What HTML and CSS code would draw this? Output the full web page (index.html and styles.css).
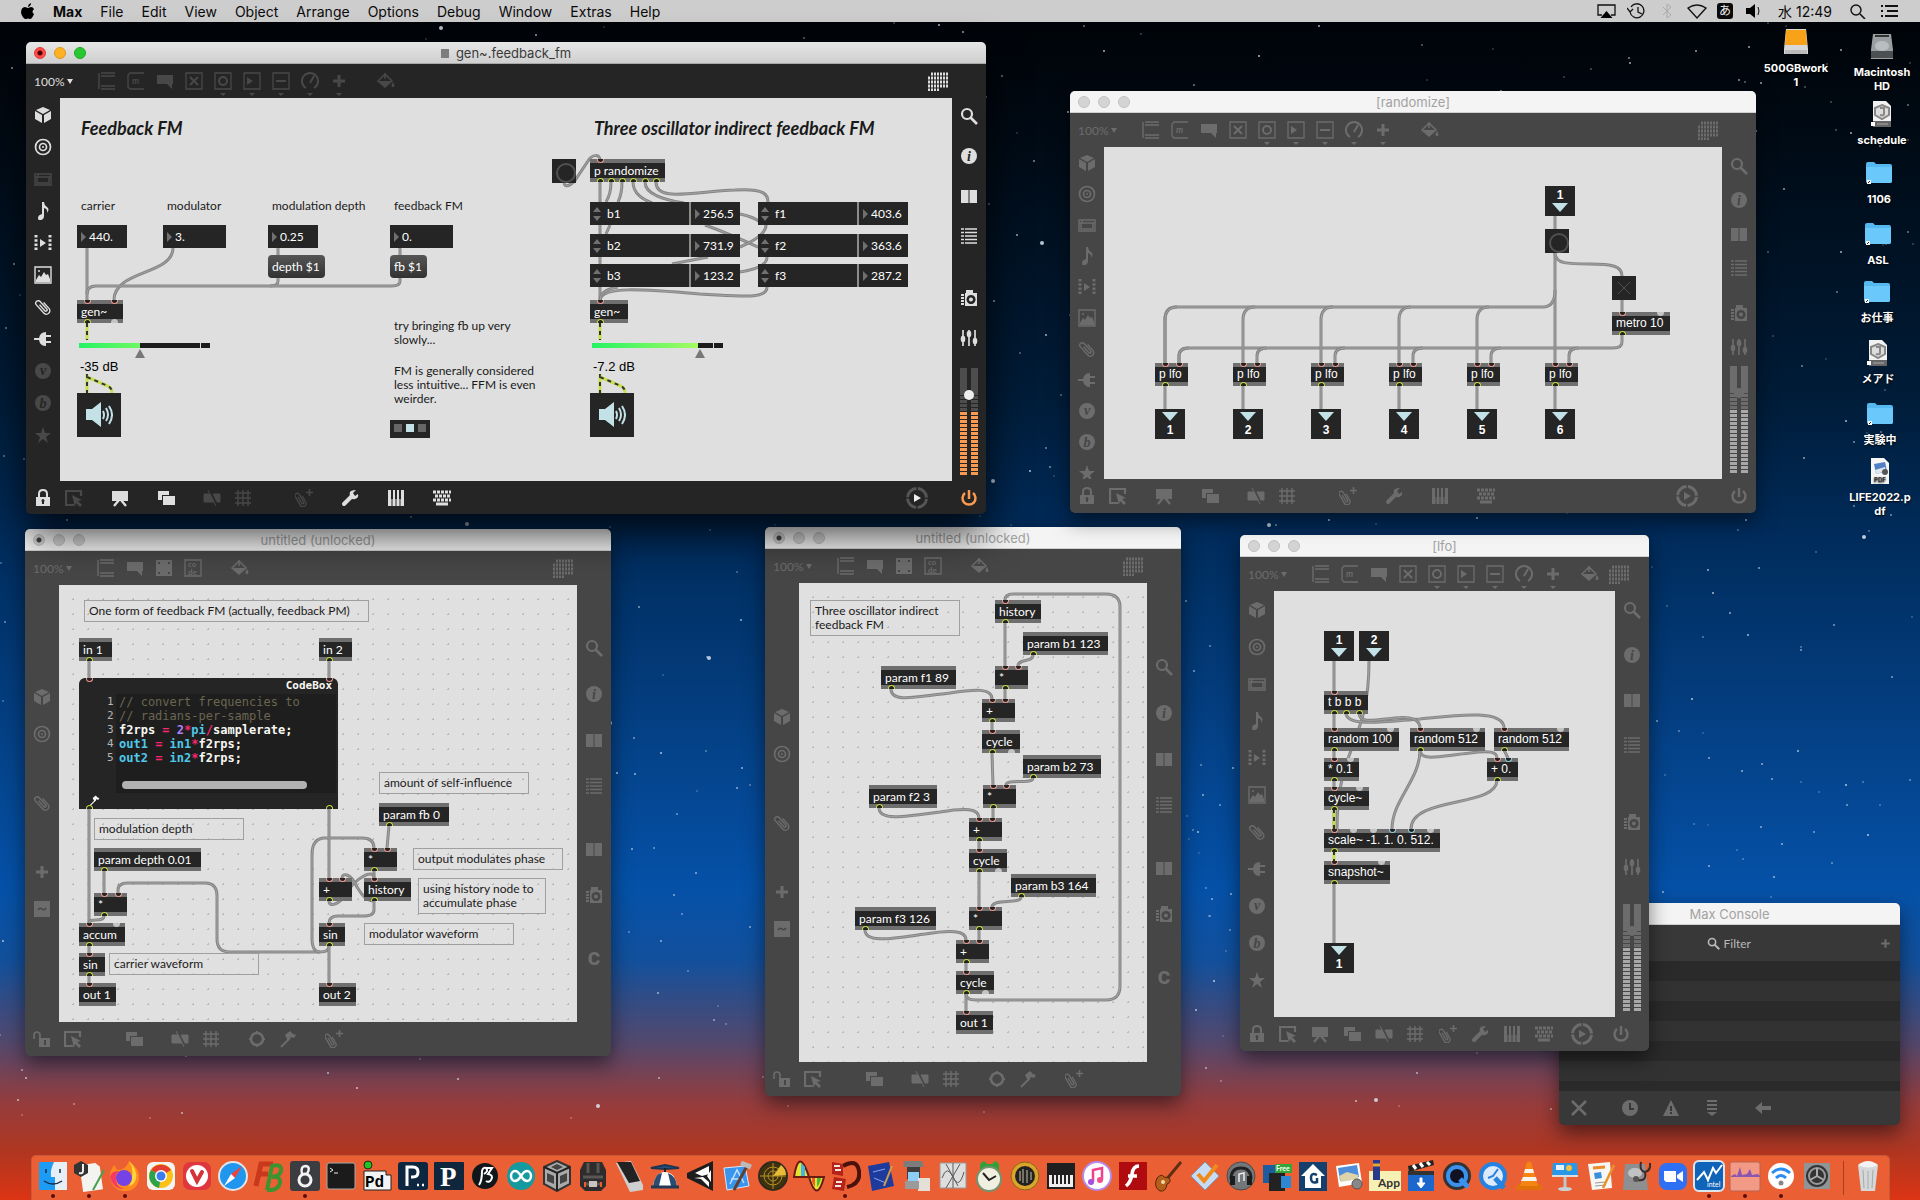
FILE: index.html
```html
<!DOCTYPE html>
<html lang="ja">
<head>
    <meta charset="UTF-8">
    <meta name="viewport" content="width=device-width, initial-scale=1.0">
    <title>Max</title>
    <link rel="stylesheet" href="styles.css">
</head>
<body>
    <!-- icon sprite -->
    <svg class="sprite" aria-hidden="true">
        <symbol id="object" viewBox="0 0 18 18"><path d="M1 1v16M3 1h14M3 4h14M3 14h14M3 17h14" fill="none" stroke="currentColor" stroke-width="1.4"/></symbol>
        <symbol id="message" viewBox="0 0 18 18"><path d="M17 1H3L1 3v12l2 2h14" fill="none" stroke="currentColor" stroke-width="1.3"/><text x="5" y="12" font-size="9" font-weight="bold" font-style="italic" fill="currentColor">m</text></symbol>
        <symbol id="comment" viewBox="0 0 18 18"><path d="M1 3h16v9h-1v5l-5-5H1z" fill="currentColor"/></symbol>
        <symbol id="toggle" viewBox="0 0 18 18"><path d="M1 1h16v16H1z" fill="none" stroke="currentColor" stroke-width="1.3"/><path d="M5 5l8 8M13 5l-8 8" stroke="currentColor" stroke-width="2"/></symbol>
        <symbol id="button" viewBox="0 0 18 18"><path d="M1 1h16v16H1z" fill="none" stroke="currentColor" stroke-width="1.3"/><circle cx="9" cy="9" r="4" fill="none" stroke="currentColor" stroke-width="2"/></symbol>
        <symbol id="number" viewBox="0 0 18 18"><path d="M1 1h16v16H1z" fill="none" stroke="currentColor" stroke-width="1.3"/><path d="M4 5l6 4-6 4z" fill="currentColor"/></symbol>
        <symbol id="slider" viewBox="0 0 18 18"><path d="M1 1h16v16H1z" fill="none" stroke="currentColor" stroke-width="1.3"/><path d="M4 9h10" stroke="currentColor" stroke-width="2"/></symbol>
        <symbol id="dial" viewBox="0 0 18 18"><path d="M5 16a8 8 0 1 1 8 0M9 11l4-7" fill="none" stroke="currentColor" stroke-width="2"/></symbol>
        <symbol id="plus" viewBox="0 0 18 18"><path d="M9 3v12M3 9h12" stroke="currentColor" stroke-width="3"/></symbol>
        <symbol id="code" viewBox="0 0 18 18"><path d="M1 1h16v16H1z" fill="none" stroke="currentColor" stroke-width="1.3"/><text x="4" y="8" font-size="8" font-weight="bold" fill="currentColor">co</text><text x="4" y="16" font-size="8" font-weight="bold" fill="currentColor">de</text></symbol>
        <symbol id="operator" viewBox="0 0 18 18"><path d="M1 1h16v16H1z" fill="currentColor"/><path class="cutline" d="M4 3v2M14 3v2M4 13v2M14 13v2" stroke-width="2"/></symbol>
        <symbol id="paint" viewBox="0 0 18 18"><path d="M8 1v6M8 2l7 7-7 6-7-6z" fill="none" stroke="currentColor" stroke-width="1.5"/><path d="M2 9h12l-6 6zM16 10q3 5 0 5t0-5" fill="currentColor"/></symbol>
        <symbol id="cube" viewBox="0 0 18 18"><path d="M9 1l7 3-7 4-7-4zM1 5l7 4v8l-7-4zM17 5v8l-7 4V9z" fill="currentColor"/></symbol>
        <symbol id="target" viewBox="0 0 18 18"><g fill="none" stroke="currentColor" stroke-width="1.7"><circle cx="9" cy="9" r="7.5"/><circle cx="9" cy="9" r="3.5"/></g><circle cx="9" cy="9" r="1" fill="currentColor"/></symbol>
        <symbol id="drawer" viewBox="0 0 18 18"><path d="M1 4h16v11H1zM1 7h16M3 7v6h12V7M4 4v3" fill="none" stroke="currentColor" stroke-width="1.4"/></symbol>
        <symbol id="note" viewBox="0 0 18 18"><path d="M8 0h2q0 3 3 5t0 6q1-4-3-5v8q0 3-3 4t-3-2 4-4z" fill="currentColor"/></symbol>
        <symbol id="film" viewBox="0 0 18 18"><path d="M2 1v16M16 1v16" stroke="currentColor" stroke-width="3" stroke-dasharray="2.5 1.7"/><path d="M6 5l6 4-6 4z" fill="currentColor"/></symbol>
        <symbol id="image" viewBox="0 0 18 18"><path d="M1 1h16v16H1z" fill="none" stroke="currentColor" stroke-width="1.4"/><path d="M2 14l3-5 2 2 3-5 2 3 2-1 2 5v3H2z" fill="currentColor"/><circle cx="5" cy="5" r="1" fill="currentColor"/></symbol>
        <symbol id="clip" viewBox="0 0 18 18"><path transform="rotate(-42 9 9)" d="M12.500 6v8a3.500 3.500 0 0 1-7 0V3a2.500 2.500 0 0 1 5 0v10a1.300 1.300 0 0 1-2.600 0V5" fill="none" stroke="currentColor" stroke-width="1.400"/></symbol>
        <symbol id="clipadd" viewBox="0 0 18 18"><path transform="translate(-2 2) rotate(-30 9 9) scale(.9)" d="M12.500 6v8a3.500 3.500 0 0 1-7 0V3a2.500 2.500 0 0 1 5 0v10a1.300 1.300 0 0 1-2.600 0V5" fill="none" stroke="currentColor" stroke-width="1.400"/><path d="M14.500 0v7M11 3.500h7" stroke="currentColor" stroke-width="1.600"/></symbol>
        <symbol id="plug" viewBox="0 0 18 18"><path d="M0 8h5q1-6 7-6v3h5v2h-5v4h5v2h-5v3q-6 0-7-6H0z" fill="currentColor"/></symbol>
        <symbol id="vizzie" viewBox="0 0 18 18"><circle cx="9" cy="9" r="8" fill="currentColor"/><text x="9" y="13" text-anchor="middle" class="cut">v</text></symbol>
        <symbol id="beap" viewBox="0 0 18 18"><circle cx="9" cy="9" r="8" fill="currentColor"/><text x="9" y="14" text-anchor="middle" class="cut">b</text></symbol>
        <symbol id="info" viewBox="0 0 18 18"><circle cx="9" cy="9" r="8" fill="currentColor"/><text x="9" y="14" text-anchor="middle" class="cut">i</text></symbol>
        <symbol id="star" viewBox="0 0 18 18"><path d="M9 1l2 6h6l-5 4 2 6-5-4-5 4 2-6-5-4h6z" fill="currentColor"/></symbol>
        <symbol id="search" viewBox="0 0 18 18"><circle cx="7" cy="7" r="5" fill="none" stroke="currentColor" stroke-width="2.2"/><path d="M10 10l7 7" stroke="currentColor" stroke-width="2.6"/></symbol>
        <symbol id="book" viewBox="0 0 18 18"><path d="M1 3h7.500v13H1zM9.500 3H17v13H9.500z" fill="currentColor"/></symbol>
        <symbol id="list" viewBox="0 0 18 18"><path d="M1 2h3M5 2h12M1 5.500h3M5 5.500h12M1 9h3M5 9h12M1 12.500h3M5 12.500h12M1 16h3M5 16h12" stroke="currentColor" stroke-width="1.5"/></symbol>
        <symbol id="camera" viewBox="0 0 18 18"><path fill-rule="evenodd" d="M6 1h7v3h4v13H5V4h1zM11 6a4.500 4.500 0 1 0 .1 0zM11 8.500a2 2 0 1 1-.1 0z" fill="currentColor"/><path d="M2.500 5v12" stroke="currentColor" stroke-width="3" stroke-dasharray="2 1"/></symbol>
        <symbol id="mixer" viewBox="0 0 18 18"><path d="M3 1v16M9 1v16M15 1v16" stroke="currentColor" stroke-width="1.7"/><path d="M3 9v2M9 4v2M15 11v2" stroke="currentColor" stroke-width="4.5" stroke-linecap="round"/></symbol>
        <symbol id="lock" viewBox="0 0 18 18"><path fill-rule="evenodd" d="M2 8h14v9H2zM9 10a2 2 0 0 0-1 3v2h2v-2a2 2 0 0 0-1-3z" fill="currentColor"/><path d="M5 9V5q0-4 4-4t4 4v4" fill="none" stroke="currentColor" stroke-width="2"/></symbol>
        <symbol id="unlock" viewBox="0 0 18 18"><path fill-rule="evenodd" d="M6 8h11v9H6zM11 10v5h2v-5z" fill="currentColor"/><path d="M1 9V5q0-3 3-3t3 3v3" fill="none" stroke="currentColor" stroke-width="1.7"/></symbol>
        <symbol id="select" viewBox="0 0 18 18"><path d="M9 16H1V2h15v5" fill="none" stroke="currentColor" stroke-width="2.200"/><path d="M7 6l10 5-4 1 4 4-2 2-4-4-1 4z" fill="currentColor"/></symbol>
        <symbol id="present" viewBox="0 0 18 18"><path d="M1 2h16v10H1z" fill="currentColor"/><path d="M8 11l-5 6M10 11l5 6" stroke="currentColor" stroke-width="2.4"/></symbol>
        <symbol id="layers" viewBox="0 0 18 18"><path d="M1 2h11v4H5v5H1zM6 7h12v9H6z" fill="currentColor"/></symbol>
        <symbol id="snap" viewBox="0 0 18 18"><path d="M1 5h6l4 8H1zM10 5h7v8h-3zM5 1l8 16" fill="currentColor" stroke="currentColor"/></symbol>
        <symbol id="grid" viewBox="0 0 18 18"><path d="M4 1v16M9 1v16M14 1v16M1 4h16M1 9h16M1 14h16" stroke="currentColor" stroke-width="1.4"/></symbol>
        <symbol id="wrench" viewBox="0 0 18 18"><path d="M3 15l8-8" stroke="currentColor" stroke-width="4" stroke-linecap="round"/><path d="M15 1l-3 3 2 3 3-2q1 4-3 5t-5-3 1-5 5-1z" fill="currentColor"/></symbol>
        <symbol id="keys" viewBox="0 0 18 18"><path d="M1 1h3v9h2V1h2v9h2V1h2v9h2V1h3v16H1z" fill="currentColor"/><path class="cutline" d="M5 10v7M9 10v7M13 10v7"/></symbol>
        <symbol id="keyboard" viewBox="0 0 18 18"><path d="M0 3h18M2 7h15M0 11h18" stroke="currentColor" stroke-width="3" stroke-dasharray="3 1"/><path d="M3 15h12" stroke="currentColor" stroke-width="3"/></symbol>
        <symbol id="transport" viewBox="0 0 24 24"><circle cx="12" cy="12" r="9.500" fill="none" stroke="currentColor" stroke-width="3" stroke-dasharray="13.400 1.500" stroke-dashoffset="-.8"/><path d="M9 8l7 4-7 4z"/></symbol>
        <symbol id="power" viewBox="0 0 18 18"><path d="M5 4a6.500 6.500 0 1 0 8 0M9 1v9" fill="none" stroke="currentColor" stroke-width="2.5"/></symbol>
        <symbol id="ring" viewBox="0 0 18 18"><circle cx="9" cy="9" r="6" fill="none" stroke="currentColor" stroke-width="2.5"/><path d="M9 1v2M9 15v2M1 9h2M15 9h2" stroke="currentColor" stroke-width="2"/></symbol>
        <symbol id="tack" viewBox="0 0 18 18"><path d="M2 17L11 8" stroke="currentColor" stroke-width="2"/><path d="M6 5l5-4 3 3 3 1-2 3-3-1-3 4z" fill="currentColor"/></symbol>
        <symbol id="tilde" viewBox="0 0 18 18"><path d="M1 1h16v16H1z" fill="currentColor"/><path class="cutline" d="M5 10q2-3 4-1t4-1" stroke-width="1.5"/></symbol>
        <symbol id="letterc" viewBox="0 0 18 18"><text x="9" y="16" text-anchor="middle" class="big">C</text></symbol>
        <symbol id="calendar" viewBox="0 0 21 19"><path d="M3 2h18M0 6h21M0 10h21M0 14h21M0 18h12" stroke="currentColor" stroke-width="3" stroke-dasharray="2 1"/></symbol>
        <symbol id="cross" viewBox="0 0 18 18"><path d="M2 2l14 14M16 2L2 16" stroke="currentColor" stroke-width="2.5"/></symbol>
        <symbol id="clock" viewBox="0 0 18 18"><circle cx="9" cy="9" r="8" fill="currentColor"/><path class="cutline" d="M9 4v6h4" stroke-width="2"/></symbol>
        <symbol id="warning" viewBox="0 0 18 18"><path d="M9 1l8 16H1z" fill="currentColor"/><path class="cutline" d="M9 7v5M9 13v2" stroke-width="2"/></symbol>
        <symbol id="rows" viewBox="0 0 18 18"><path d="M4 2h10M4 6h10M4 10h10" stroke="currentColor" stroke-width="2"/><path d="M4 13h10l-5 4z" fill="currentColor"/></symbol>
        <symbol id="back" viewBox="0 0 18 18"><path d="M1 9l7-6v4h9v4H8v4z" fill="currentColor"/></symbol>
        <symbol id="folder" viewBox="0 0 26 22"><path d="M0 2q0-2 2-2h6l2 2h14q2 0 2 2v15q0 2-2 2H2q-2 0-2-2z" fill="#55b9f0"/><path d="M0 5h26v14q0 2-2 2H2q-2 0-2-2z" fill="#6ac8fa"/><path d="M1 18h4v4H1z" fill="#fff"/><path d="M2 21l2-2" stroke="#222"/></symbol>
        <symbol id="textfile" viewBox="0 0 26 26"><path d="M4 0h13l5 5v21H4z" fill="#f2f2f2"/><path d="M4 20h18v6H4z" fill="#666"/><path d="M13 4l7 3v7l-7 4-7-4V7z" fill="#ddd" stroke="#888" stroke-width="2"/><path d="M11 7h4v6q0 2-4 1M8 23h11" fill="none" stroke="#888" stroke-width="2"/><path d="M2 21h4v4H2z" fill="#fff"/></symbol>
        <symbol id="pdffile" viewBox="0 0 26 26"><path d="M4 0h13l5 5v21H4z" fill="#f6f6f6"/><path d="M7 6l11-2 2 9-11 3z" fill="#4f7fc4"/><path d="M8 12l10-3 1 4-10 3z" fill="#dfe7ee"/><circle cx="18" cy="14" r="3" fill="#555"/><text x="7" y="24" font-size="6" fill="#333">PDF</text></symbol>
        <symbol id="disk" viewBox="0 0 26 26"><path d="M4 1h18l2 16v9H2v-9z" fill="#9aa0a2"/><path d="M2 18h22v7H2z" fill="#4c5051"/><ellipse cx="13" cy="13" rx="7" ry="5" fill="#b9bec0"/><path d="M6 3h14" stroke="#333" stroke-width="2"/></symbol>
        <symbol id="extdisk" viewBox="0 0 26 26"><path d="M3 0h20l2 20v5H1v-5z" fill="#d8d8d8"/><path d="M3 1h20l1 15H2z" fill="#f8a21a"/><path d="M2 21h22v4H2z" fill="#bbb"/></symbol>
    </svg>

    <nav class="menubar">
        <svg class="apple" viewBox="0 0 14 16"><path d="M10 0q0 3-3 4 0-3 3-4zM13 11q-2 5-4 5l-2-.6L5 16q-3 0-5-6 0-6 4-6l3 1 3-1q2 0 3 2-3 3 0 5z"/></svg>
        <a href="#" class="app-name">Max</a>
        <a href="#">File</a>
        <a href="#">Edit</a>
        <a href="#">View</a>
        <a href="#">Object</a>
        <a href="#">Arrange</a>
        <a href="#">Options</a>
        <a href="#">Debug</a>
        <a href="#">Window</a>
        <a href="#">Extras</a>
        <a href="#">Help</a>
        <div class="status">
            <svg viewBox="0 0 20 16"><path d="M5 12H1V2h17v10h-4" fill="none" stroke="#111" stroke-width="1.3"/><path d="M9.500 8l6 7h-12z"/></svg>
            <svg viewBox="0 0 20 16"><path d="M4 4a7 7 0 1 1-1 5M11 4v5l4 2M0 5l3 4 3-3" fill="none" stroke="#111" stroke-width="1.3"/></svg>
            <svg viewBox="0 0 20 16"><path d="M6 4l8 8-4 3V1l4 3-8 8" fill="none" stroke="#aaa"/></svg>
            <svg viewBox="0 0 20 16"><path d="M1 5q9-6 18 0l-9 10z" fill="none" stroke="#111" stroke-width="1.3"/></svg>
            <span class="ime">あ</span>
            <svg viewBox="0 0 20 16"><path d="M3 5h4l5-4v14l-5-4H3z"/><path d="M15 4q2 4 0 8" fill="none" stroke="#111"/></svg>
            <span class="time">水 12:49</span>
            <svg viewBox="0 0 20 16"><circle cx="8" cy="7" r="5" fill="none" stroke="#111" stroke-width="1.4"/><path d="M12 11l5 5" stroke="#111" stroke-width="1.6"/></svg>
            <svg viewBox="0 0 20 16"><path d="M5 3h13M7 8h11M5 13h13M1 3h2M1 8h2M1 13h2" stroke="#111" stroke-width="2"/></svg>
        </div>
    </nav>

    <main class="desktop" id="desktop">
        <svg class="stars" id="stars" aria-hidden="true"></svg>

        <section class="window console" id="console">
            <header class="titlebar"><h2>Max Console</h2></header>
            <div class="filter">
                <svg class="icon"><use href="#search"/></svg>
                <input type="text" aria-label="Filter" placeholder="Filter">
                <button class="tool" aria-label="Add"><svg class="icon"><use href="#plus"/></svg></button>
            </div>
            <div class="log"></div>
            <div class="bar-bottom" data-icons="cross || clock | warning | rows || back"></div>
        </section>

        <section class="window" id="lfo" data-title="[lfo]"
            data-top="object message comment toggle button+ number+ slider+ dial+ plus+ | paint"
            data-left="cube target drawer note film image clip plug vizzie beap star"
            data-right="search info book list | camera mixer meter"
            data-bottom="lock select | present | layers | snap grid || clipadd | wrench | keys | keyboard"
            data-end="transport power"></section>

        <section class="window edited" id="gen2" data-title="untitled (unlocked)"
            data-top="object comment operator code | paint"
            data-left="cube target | clip | plus tilde"
            data-right="search info book list | book camera | letterc"
            data-bottom="unlock select || layers | snap grid | ring tack | clipadd"
            data-end=""></section>

        <section class="window edited" id="gen1" data-title="untitled (unlocked)"
            data-top="object comment operator code | paint"
            data-left="cube target | clip | plus tilde"
            data-right="search info book list | book camera | letterc"
            data-bottom="unlock select || layers | snap grid | ring tack | clipadd"
            data-end=""></section>

        <section class="window" id="randomize" data-title="[randomize]"
            data-top="object message comment toggle button+ number+ slider+ dial+ plus+ | paint"
            data-left="cube target drawer note film image clip plug vizzie beap star"
            data-right="search info book list | camera mixer meter"
            data-bottom="lock select | present | layers | snap grid || clipadd | wrench | keys | keyboard"
            data-end="transport power"></section>

        <section class="window edited active" id="fm" data-title="gen~.feedback_fm"
            data-top="object- message- comment- toggle- button+- number+- slider+- dial+- plus+- | paint-"
            data-left="cube target drawer- note film image clip plug vizzie- beap- star-"
            data-right="search info book list | camera mixer meter"
            data-bottom="lock select- | present | layers | snap- grid- || clipadd- | wrench | keys | keyboard"
            data-end="transport power"></section>
    </main>

    <footer class="dock">
        <button class="app running" aria-label="Finder"><svg viewBox="0 0 32 32"><path d="M2 2h28v28H2z" fill="#e6eef6"/><path d="M2 2h15q-4 8-3 15h4v13H2z" fill="#1c9cf5"/><path d="M9 9v4M23 9v4M7 21q9 6 18 0" fill="none" stroke="#1b2b45" stroke-width="1.5"/></svg></button>
        <button class="app running" aria-label="Jedit"><svg viewBox="0 0 32 32"><path d="M8 4h16l4 4v23H8z" fill="#f3f3f0" transform="rotate(-8 16 16)"/><path d="M8 1l7 4v8l-7 4-7-4V5z" fill="#333"/><path d="M10 4v7q0 3-4 2" fill="none" stroke="#eee" stroke-width="2"/><path d="M20 30L31 10" stroke="#47a04a" stroke-width="2"/></svg></button>
        <button class="app running" aria-label="Firefox"><svg viewBox="0 0 32 32"><path d="M20 1q11 8 10 18-2 12-14 12T1 18Q1 8 6 5q0 4 3 5 8 0 11-9z" fill="#ff8a1f"/><path d="M20 1q9 9 7 18-2 6-7 7Q27 12 20 1z" fill="#ffd43a"/><circle cx="15" cy="18" r="8" fill="#7542e5"/><path d="M1 17q3 12 14 12-9-2-8-13 0-3 3-5-7-1-9 6z" fill="#f53b63"/></svg></button>
        <button class="app" aria-label="Chrome"><svg viewBox="0 0 32 32"><rect x="2" y="2" width="28" height="28" rx="6" fill="#f4f4f4"/><circle cx="16" cy="16" r="12" fill="#fbc116"/><path d="M16 16L6 10a12 12 0 0 1 20 0z" fill="#e43e2f"/><path d="M16 16L6 10a12 12 0 0 0 8 18z" fill="#2ba24c"/><circle cx="16" cy="16" r="6" fill="#fff"/><circle cx="16" cy="16" r="4.500" fill="#3b7ded"/></svg></button>
        <button class="app" aria-label="Vivaldi"><svg viewBox="0 0 32 32"><rect x="2" y="2" width="28" height="28" rx="7" fill="#e0363d"/><circle cx="16" cy="16" r="11" fill="#fff"/><path d="M11 11l5 10 5-9" fill="none" stroke="#d5333a" stroke-width="4" stroke-linecap="round"/></svg></button>
        <button class="app" aria-label="Safari"><svg viewBox="0 0 32 32"><circle cx="16" cy="16" r="15" fill="#dfe5ea"/><circle cx="16" cy="16" r="13" fill="#2196ee"/><path d="M25 6l-7 12-4-4z" fill="#f3413b"/><path d="M7 26l7-12 4 4z" fill="#fff"/></svg></button>
        <button class="app" aria-label="FontBook"><svg viewBox="0 0 32 32"><path d="M3 26L8 4h12M6 14h9" fill="none" stroke="#c8381c" stroke-width="5"/><path d="M14 30L19 6q10-3 9 5-1 5-9 6 9-1 8 6-2 8-13 7" fill="none" stroke="#3d9330" stroke-width="4"/></svg></button>
        <button class="app running" aria-label="Max"><svg viewBox="0 0 32 32"><rect x="1" y="1" width="30" height="30" rx="3" fill="#3b3d40"/><circle cx="16" cy="20" r="6" fill="none" stroke="#f4f4f4" stroke-width="3"/><path d="M13 14q-2-8 4-8 5 1 1 8" fill="none" stroke="#f4f4f4" stroke-width="2.5"/></svg></button>
        <button class="app" aria-label="Terminal"><svg viewBox="0 0 32 32"><rect x="2" y="3" width="28" height="26" rx="2" fill="#1b1b1b" stroke="#a9a9a9"/><path d="M5 8l3 2-3 2M9 13h4" fill="none" stroke="#eee"/></svg></button>
        <button class="app" aria-label="Pd"><svg viewBox="0 0 32 32"><path d="M3 11h22v4h5v15H3z" fill="#f3f3f3" stroke="#222"/><circle cx="7" cy="5" r="4" fill="#1fc41f" stroke="#222"/><text x="4" y="27" font-size="16" font-weight="bold" font-family="Liberation Mono, monospace">Pd</text></svg></button>
        <button class="app" aria-label="Processing"><svg viewBox="0 0 32 32"><rect x="1" y="2" width="30" height="28" rx="3" fill="#0e2740"/><path d="M10 26V7h6q5 0 5 5t-5 5h-2" fill="none" stroke="#fff" stroke-width="3"/><path d="M20 25h2M25 25h2" stroke="#fff" stroke-width="2.5"/></svg></button>
        <button class="app" aria-label="Processing 2"><svg viewBox="0 0 32 32"><rect x="1" y="2" width="30" height="28" rx="1" fill="#10263c"/><text x="7" y="26" font-size="27" font-family="Liberation Serif, serif" font-weight="bold" fill="#fff">P</text></svg></button>
        <button class="app" aria-label="Processing 3"><svg viewBox="0 0 32 32"><circle cx="16" cy="16" r="13" fill="#10171b"/><path d="M10 25q3-4 3-14 1-4 4-3 3 3-2 6M17 8h6l-4 6q6 1 3 6-2 3-5 1" fill="none" stroke="#fff" stroke-width="2"/></svg></button>
        <button class="app" aria-label="Arduino"><svg viewBox="0 0 32 32"><circle cx="16" cy="16" r="14" fill="#159a9f"/><path d="M16 16q-3-5-6-5a4 5 0 0 0 0 10q3 0 6-5 3-5 6-5a4 5 0 0 1 0 10q-3 0-6-5z" fill="none" stroke="#fff" stroke-width="2.5"/></svg></button>
        <button class="app" aria-label="Cube"><svg viewBox="0 0 32 32"><path d="M16 1l13 6v17l-13 7-13-7V7z" fill="#aaa" stroke="#333" stroke-width="2"/><path d="M3 7l13 6 13-6M16 13v18" stroke="#222" stroke-width="2" fill="none"/><path d="M6 13l7 3v8l-7-3zM26 13l-7 3v8l7-3zM16 4l6 3-6 3-6-3z" fill="#444"/></svg></button>
        <button class="app" aria-label="Logic"><svg viewBox="0 0 32 32"><path d="M7 2h18l4 8v16l-5 5H8l-5-5V10z" fill="#2e2c2c"/><path d="M11 3v10M21 3v10M6 17h20M8 24h16" stroke="#5a5654" stroke-width="3"/><path d="M12 21h8v6h-8z" fill="#c9c4bf"/><path d="M8 22v5M24 22v5" stroke="#f05a28" stroke-width="2"/></svg></button>
        <button class="app" aria-label="Device"><svg viewBox="0 0 32 32"><path d="M3 3l15-2 12 24v5l-13 2z" fill="#cfcfcf"/><path d="M4 2h14l9 19-11 2z" fill="#222"/></svg></button>
        <button class="app" aria-label="Propeller"><svg viewBox="0 0 32 32"><path d="M2 8l14-3 14 3-14 1z" fill="#24507e" stroke="#1c3555" stroke-width="2"/><path d="M16 8v4" stroke="#222" stroke-width="2"/><path d="M4 26q2-14 12-14t12 14z" fill="#fff"/><path d="M4 26q2-13 9-13l-3 13zM19 13q8 3 9 13h-6z" fill="#2b4d72"/><path d="M2 27h28" stroke="#223a55" stroke-width="3"/></svg></button>
        <button class="app" aria-label="Unity"><svg viewBox="0 0 32 32"><path d="M28 1v30L2 18v-5z" fill="#1d1d1d"/><path d="M24 6v8l-7 2-7-3zM9 18l7 1 8 8v-5l-6-5zM26 10v12l-4-6z" fill="#fff"/></svg></button>
        <button class="app" aria-label="Xcode"><svg viewBox="0 0 32 32"><path d="M3 8l21-2 4 20-22 4z" fill="#3a95ee" stroke="#d8e9fa"/><path d="M9 24l7-14 7 13M10 19h12" fill="none" stroke="#bfe0ff" stroke-width="1.5"/><path d="M13 30L26 6" stroke="#5a4236" stroke-width="3"/><path d="M20 3l10 4" stroke="#bbb" stroke-width="5"/></svg></button>
        <button class="app" aria-label="Radar"><svg viewBox="0 0 32 32"><circle cx="16" cy="16" r="14" fill="#3c3210" stroke="#332a1a" stroke-width="2"/><g fill="none" stroke="#b99125"><circle cx="16" cy="16" r="9"/><circle cx="16" cy="16" r="5"/><path d="M16 3v26M3 16h26"/></g><path d="M16 16L24 5q5 4 5 10z" fill="#e7bb37"/></svg></button>
        <button class="app" aria-label="Wave"><svg viewBox="0 0 32 32"><path d="M1 17Q6-14 16 17zM16 17h15q-7 27-15 0z" fill="#e5e32e" stroke="#6a1b12" stroke-width="2"/><path d="M8 3l4 4v9H8z" fill="#43b7e8"/><path d="M24 18h4q-1 6-4 9z" fill="#49b83c"/><path d="M19 18h3v9l-3-5z" fill="#ef5a2a"/></svg></button>
        <button class="app running" aria-label="Serial"><svg viewBox="0 0 32 32"><path d="M14 6q14-8 16 5t-12 16" fill="none" stroke="#4a120d" stroke-width="4"/><path d="M3 2l11 2v12L3 14zM5 17l12 2-2 12-12-2z" fill="#b4221a"/><path d="M5 6h6M6 10h6M7 22h6M6 26h6" stroke="#f4e7e0" stroke-width="2"/></svg></button>
        <button class="app" aria-label="Blueprint"><svg viewBox="0 0 32 32"><path d="M3 6l21-4 5 24-22 5z" fill="#1e3a9c"/><path d="M8 12l12-3M9 18l12 5" stroke="#86a6ed"/><path d="M27 6l-8 20" stroke="#c9a14c" stroke-width="2"/></svg></button>
        <button class="app" aria-label="Archive"><svg viewBox="0 0 32 32"><path d="M3 1h18l2 6H2z" fill="#7c7c7c"/><path d="M6 7h13v12H6z" fill="#3e3e3e"/><path d="M7 12h11v10H7z" fill="#8ecdf4"/><path d="M17 18h12v13H17z" fill="#e4e0d8"/><path d="M4 21h14v8H4z" fill="#9a9a9a"/></svg></button>
        <button class="app" aria-label="Grapher"><svg viewBox="0 0 32 32"><path d="M3 3h26v25H3z" fill="#dedede" stroke="#999"/><path d="M5 18q5-14 11-1t11-5M9 4l12 22M23 4L9 28M16 3v25" fill="none" stroke="#5a5a5a"/></svg></button>
        <button class="app" aria-label="Frog clock"><svg viewBox="0 0 32 32"><path d="M7 5q3-7 7-1h5q4-6 7 1v7H7z" fill="#32a03a"/><circle cx="16" cy="19" r="12" fill="#f1efe0" stroke="#74936e" stroke-width="2"/><path d="M10 13l6 7 7-4" fill="none" stroke="#222" stroke-width="2"/></svg></button>
        <button class="app" aria-label="Coin"><svg viewBox="0 0 32 32"><circle cx="16" cy="16" r="14" fill="#d9a52a" stroke="#8e6218"/><circle cx="16" cy="16" r="10" fill="#222"/><path d="M11 11v10M14 9v14M18 10v13M22 12v8" stroke="#c9c2a5"/></svg></button>
        <button class="app" aria-label="Piano"><svg viewBox="0 0 32 32"><path d="M2 3h28v26H2z" fill="#1f1f1f"/><path d="M4 15h24v12H4z" fill="#eee"/><path d="M8 15v9M12 15v9M16 15v9M20 15v9M24 15v9" stroke="#222" stroke-width="2"/></svg></button>
        <button class="app" aria-label="iTunes"><svg viewBox="0 0 32 32"><circle cx="16" cy="16" r="14" fill="#fff" stroke="#b58ae8" stroke-width="2"/><path d="M12 22V10l9-2v12" fill="none" stroke="#f0428b" stroke-width="2.5"/><circle cx="10" cy="22" r="3" fill="#a551e0"/><circle cx="19" cy="20" r="3" fill="#f0508b"/></svg></button>
        <button class="app" aria-label="Flash"><svg viewBox="0 0 32 32"><path d="M2 2h28v28H2z" fill="#b00c10"/><path d="M22 6q-6 0-7 8t-6 12M11 16h9" fill="none" stroke="#fff" stroke-width="3.5"/></svg></button>
        <button class="app" aria-label="GarageBand"><svg viewBox="0 0 32 32"><path d="M13 20L28 2" stroke="#5d2f14" stroke-width="3"/><path d="M4 18q5-5 7-1l5 1q3 4-2 6-1 8-7 7-7-4-3-13z" fill="#b45f1c" stroke="#5d2508"/><circle cx="10" cy="22" r="2" fill="#eed9a8"/></svg></button>
        <button class="app" aria-label="Check"><svg viewBox="0 0 32 32"><path d="M16 2l14 14-14 14L2 16z" fill="#c6dcf2" stroke="#7a9ec4"/><path d="M9 14l6 7L28 5" fill="none" stroke="#f08a1a" stroke-width="4"/></svg></button>
        <button class="app" aria-label="Headphones"><svg viewBox="0 0 32 32"><circle cx="16" cy="16" r="14" fill="#73777a" stroke="#4a4a4a"/><path d="M6 19q0-11 10-11t10 11" fill="none" stroke="#222" stroke-width="3"/><path d="M5 16h5v9H5zM22 16h5v9h-5z" fill="#1c1c1c"/><path d="M14 22v-8l5-1v8" fill="none" stroke="#eee" stroke-width="1.5"/></svg></button>
        <button class="app" aria-label="Video converter"><svg viewBox="0 0 32 32"><path d="M2 5h18v18H2z" fill="#1d5c9e"/><path d="M8 13h16v18H8z" fill="#222"/><path d="M14 4h17v9H14z" fill="#31a73a"/><text x="15" y="11" font-size="7" font-weight="bold" fill="#fff">Free</text><path d="M20 16h10v12H20z" fill="#2d88d3"/></svg></button>
        <button class="app" aria-label="Home"><svg viewBox="0 0 32 32"><path d="M2 2h28v29H2z" fill="#15406e"/><path d="M16 4l12 12h-4v12H8V16H4z" fill="#fff"/><path d="M20 15q-6-3-6 3t6 4v-4" fill="none" stroke="#15406e" stroke-width="2.5"/></svg></button>
        <button class="app" aria-label="Preview"><svg viewBox="0 0 32 32"><path d="M3 6l23-3 3 20-23 4z" fill="#fff"/><path d="M5 8l19-3 2 12-19 4z" fill="#4d8dd9"/><path d="M6 16l8-4 11 3v4L8 22z" fill="#dcd3a8"/><circle cx="24" cy="24" r="5" fill="#888" stroke="#555"/></svg></button>
        <button class="app" aria-label="App note"><svg viewBox="0 0 32 32"><path d="M0 11h32v20H0z" fill="#f7f0b5"/><path d="M4 0h7v20H4z" fill="#273a8c"/><path d="M4 5h7" stroke="#e0a637" stroke-width="3"/><text x="9" y="27" font-size="12" font-weight="bold" fill="#333">App</text></svg></button>
        <button class="app" aria-label="Downloader"><svg viewBox="0 0 32 32"><path d="M3 14h26v17H3z" fill="#1c67cc"/><path d="M3 6l25-6 1 5L4 12z" fill="#222"/><path d="M3 11h26v4H3z" fill="#333"/><path d="M8 5l3 4M15 3l3 4M22 2l3 3" stroke="#fff" stroke-width="3"/><path d="M15 18h2v5h3l-4 5-4-5h3z" fill="#fff" stroke="#fff"/></svg></button>
        <button class="app" aria-label="QuickTime"><svg viewBox="0 0 32 32"><circle cx="16" cy="16" r="14" fill="#333"/><circle cx="16" cy="16" r="9" fill="#112" stroke="#3b91ee" stroke-width="4"/><path d="M19 19l8 8" stroke="#3b91ee" stroke-width="5"/></svg></button>
        <button class="app" aria-label="QuickTime 7"><svg viewBox="0 0 32 32"><circle cx="16" cy="16" r="12" fill="#dceafa" stroke="#2682e0" stroke-width="4"/><path d="M21 9l-5 7-5 2" fill="none" stroke="#2682e0" stroke-width="2"/><path d="M18 18l9 10" stroke="#2682e0" stroke-width="5"/></svg></button>
        <button class="app" aria-label="VLC"><svg viewBox="0 0 32 32"><path d="M5 24h22l3 6H2z" fill="#e17209"/><path d="M14 2h4l7 24H7z" fill="#f58513"/><path d="M12 9h8l1 4H11zM10 17h13l1 4H8z" fill="#f6f2ee"/></svg></button>
        <button class="app" aria-label="Keynote"><svg viewBox="0 0 32 32"><path d="M4 3h24l1 12H3z" fill="#2a98e8"/><path d="M7 5h8v5H7z" fill="#e7f2fa"/><circle cx="20" cy="8" r="3" fill="#f2c13f"/><path d="M3 15h26v2H3z" fill="#ddd"/><path d="M16 17v11" stroke="#bcc6cc" stroke-width="3"/><ellipse cx="16" cy="29" rx="7" ry="2" fill="#c9d1d6"/></svg></button>
        <button class="app" aria-label="Pages"><svg viewBox="0 0 32 32"><path d="M3 4l22-2 2 26-20 2z" fill="#f6f6f4"/><path d="M8 8l12-1" stroke="#ee8a2a" stroke-width="3"/><path d="M9 13l7-1 1 6-7 1z" fill="#3b8fda"/><path d="M10 23l11-1M10 26l11-1" stroke="#999"/><path d="M29 5L18 28" stroke="#e8922a" stroke-width="2.5"/></svg></button>
        <button class="app" aria-label="Disk Utility"><svg viewBox="0 0 32 32"><path d="M4 4h20l3 26H2z" fill="#8d8f90"/><ellipse cx="14" cy="13" rx="7" ry="5" fill="#c0c2c3"/><path d="M20 2q-2 9 4 10 6-1 5-9M24 12q2 10-8 8" fill="none" stroke="#3b2b29" stroke-width="2"/><circle cx="15" cy="19" r="3" fill="#555"/></svg></button>
        <button class="app" aria-label="Zoom"><svg viewBox="0 0 32 32"><rect x="2" y="3" width="28" height="27" rx="8" fill="#2d70f3"/><path d="M7 11h12v11H9l-2-2zM20 15l6-4v11l-6-4z" fill="#fff"/></svg></button>
        <button class="app running" aria-label="Intel Power Gadget"><svg viewBox="0 0 32 32"><rect x="1" y="1" width="30" height="30" rx="5" fill="#0f63b8" stroke="#dce6ee" stroke-width="2"/><path d="M4 20l7-8 4 8 5-12 3 5 6-8" fill="none" stroke="#fff" stroke-width="2"/><text x="14" y="27" font-size="7" fill="#fff">intel</text></svg></button>
        <button class="app running" aria-label="Activity"><svg viewBox="0 0 32 32"><rect x="1" y="2" width="30" height="29" rx="2" fill="#f29a86" stroke="#b8644f"/><path d="M2 16l4-2 2 2 3-9 2 8 5-1 3-5 2 6 6-1 2 2v1H2z" fill="#8b56b0"/></svg></button>
        <button class="app running" aria-label="Wi-Fi"><svg viewBox="0 0 32 32"><circle cx="16" cy="16" r="13" fill="#fff"/><path d="M7 13q9-8 18 0M11 18q5-5 10 0" fill="none" stroke="#2b8cf0" stroke-width="3"/><circle cx="16" cy="23" r="2.500" fill="#888"/></svg></button>
        <button class="app" aria-label="System Preferences"><svg viewBox="0 0 32 32"><path d="M3 3h26v26H3z" fill="#8f9497"/><circle cx="16" cy="16" r="11" fill="#333"/><circle cx="16" cy="16" r="8" fill="none" stroke="#999" stroke-width="2"/><path d="M16 16V8M16 16l7 4M16 16l-7 4" stroke="#aaa" stroke-width="2"/></svg></button>
        <span class="divider"></span>
        <button class="app" aria-label="Trash"><svg viewBox="0 0 32 32"><path d="M6 5h20l-3 26H9z" fill="#d5d8d8"/><path d="M6 5q10-8 20 0-10 5-20 0z" fill="#f3f3f3"/><path d="M11 10l1 18M16 11v18M21 10l-1 18" stroke="#a5aaaa"/></svg></button>
    </footer>

    <script src="script.js"></script>
</body>
</html>
```
FILE: styles.css
```css
* {
    box-sizing: border-box;
}
body {
    margin: 0;
    height: 100vh;
    display: flex;
    flex-direction: column;
    overflow: hidden;
    font-family: Lato, "Noto Sans CJK JP", sans-serif;
    font-size: 12px;
    background: linear-gradient(#000205 0%, #000d1a 15%, #001c38 33%, #002c5c 45%, #043f82 60%, #0551a8 74%, #12509c 80%, #55486c 87%, #963c3c 92%, #b03620 96%, #dc3414 100%);
}
button, input, select {
    font: inherit;
    color: inherit;
    border: 0;
    margin: 0;
    padding: 0;
    background: none;
    min-width: 0;
}
.sprite {
    display: none;
}
.icon {
    width: 18px;
    height: 18px;
    display: block;
}
.cut {
    font: italic bold 14px "Liberation Serif", serif;
    fill: var(--chrome);
}
.cutline {
    fill: none;
    stroke: var(--chrome);
}
.big {
    font: 900 19px Roboto, sans-serif;
    fill: currentColor;
}

/* menu bar */
.menubar {
    height: 22px;
    flex: none;
    display: flex;
    align-items: center;
    gap: 18px;
    padding: 0 20px 0 21px;
    background: #cdcdcd;
    color: #0a0a0a;
    font-family: Inter, "Noto Sans CJK JP", sans-serif;
    font-size: 14px;
}
.menubar a {
    color: inherit;
    text-decoration: none;
}
.menubar .app-name {
    font-weight: bold;
}
.apple {
    width: 14px;
    height: 16px;
}
.status {
    margin-left: auto;
    display: flex;
    align-items: center;
    gap: 10px;
}
.status svg {
    width: 20px;
    height: 16px;
}
.status svg:last-child {
    margin-left: 2px;
}
.ime {
    width: 16px;
    height: 16px;
    line-height: 15px;
    font-size: 12px;
    text-align: center;
    border-radius: 3px;
    background: #0a0a0a;
    color: #eee;
}
.time {
    margin: 0 6px 0 5px;
}

/* desktop */
.desktop {
    position: relative;
    flex: 1;
}
.stars {
    position: absolute;
    inset: 0;
    width: 100%;
    height: 100%;
}
.file {
    position: absolute;
    width: 70px;
    transform: translateX(-50%);
    display: flex;
    flex-direction: column;
    align-items: center;
    gap: 6px;
    color: #fff;
    font: bold 11px/14px Inter, "Noto Sans CJK JP", sans-serif;
    text-align: center;
    text-decoration: none;
    text-shadow: 0 1px 2px #000;
    white-space: pre;
}
.file svg {
    width: 26px;
    height: 26px;
}

/* windows */
.window {
    --chrome: #464646;
    --pitch: 32px;
    --gap: 16px;
    position: absolute;
    display: grid;
    grid-template: 22px 34px 1fr 34px / 34px 1fr 34px;
    border-radius: 5px;
    overflow: hidden;
    background: var(--chrome);
    color: #6c6c6c;
    box-shadow: 0 8px 20px rgba(0, 0, 0, 0.5);
}
.window.active {
    --chrome: #252525;
    grid-template-rows: 22px 34px 1fr 33px;
    color: #dedede;
    box-shadow: 0 18px 40px rgba(0, 0, 0, 0.8);
}
#fm { left: 26px; top: 20px; width: 960px; height: 472px; }
#randomize { left: 1070px; top: 69px; width: 686px; height: 422px; }
#gen1 { left: 25px; top: 507px; width: 586px; height: 527px; }
#gen2 { left: 765px; top: 505px; width: 416px; height: 569px; }
#lfo { left: 1240px; top: 513px; width: 409px; height: 516px; }
#console { left: 1559px; top: 881px; width: 341px; height: 222px; }

.titlebar {
    grid-column: 1 / -1;
    position: relative;
    display: flex;
    align-items: center;
    justify-content: center;
    background: #f4f4f4;
    border-bottom: 1px solid #d0d0d0;
    color: #a2a2a2;
    font-family: Inter, sans-serif;
}
.active .titlebar {
    background: linear-gradient(#e6e6e6, #cfcfcf);
    border-color: #a8a8a8;
    color: #3a3a3a;
}
.titlebar h2 {
    margin: 0;
    font-size: 13px;
    font-weight: normal;
}
.active h2::before {
    content: "";
    display: inline-block;
    width: 8px;
    height: 9px;
    margin-right: 7px;
    background: #7d7d7d;
}
.lights {
    position: absolute;
    left: 8px;
    display: flex;
    gap: 8px;
}
.lights button {
    width: 12px;
    height: 12px;
    border-radius: 50%;
    border: 1px solid #c2c2c2;
    background: #d4d4d4;
}
.edited .lights button:first-child {
    background: radial-gradient(circle, #444 2px, #d4d4d4 3px);
}
.active .lights button:nth-child(1) {
    background: radial-gradient(circle, #4a0000 2px, #fc4b48 3px);
    border-color: #dd3a38;
}
.active .lights button:nth-child(2) { background: #fdb124; border-color: #dc9820; }
.active .lights button:nth-child(3) { background: #29c732; border-color: #1fa827; }

.tool {
    position: relative;
    flex: none;
    display: flex;
    align-items: center;
    justify-content: center;
}
.tool.off {
    color: #484848;
}
.tool.menu::after {
    content: "";
    position: absolute;
    left: 50%;
    bottom: 2px;
    margin-left: -3px;
    border: 3px solid transparent;
    border-top-color: currentColor;
    border-bottom: 0;
}
.bar-top {
    grid-column: 1 / -1;
    display: flex;
    align-items: stretch;
    padding: 0 37px 0 8px;
}
.bar-top .tool {
    width: 29px;
}
.bar-top .gap {
    width: 18px;
    flex: none;
}
.zoom {
    width: 58px;
    flex: none;
    display: flex;
    align-items: center;
}
.zoom select {
    appearance: none;
    width: 33px;
}
.zoom::after {
    content: "";
    border: 3px solid transparent;
    border-top: 5px solid currentColor;
    border-bottom: 0;
}
.bar-top .calendar {
    margin-left: auto;
    width: 21px;
}
.calendar svg {
    width: 21px;
    height: 19px;
}
.bar-side {
    display: flex;
    flex-direction: column;
    overflow: hidden;
}
.bar-side .tool {
    height: var(--pitch);
}
.bar-side .gap {
    height: var(--gap);
    flex: none;
}
.bar-bottom {
    grid-column: 1 / -1;
    display: flex;
    align-items: center;
    padding-left: 1px;
}
.bar-bottom .tool {
    width: 31px;
    height: 34px;
}
.bar-bottom .gap {
    width: var(--bgap, 15px);
}
.bar-end {
    margin-left: auto;
    display: flex;
    gap: 18px;
}
.bar-bottom .bar-end .tool {
    width: 34px;
}
.transport .icon {
    width: 24px;
    height: 24px;
    fill: currentColor;
}
.active .transport { color: #555; }
.active .transport .icon { fill: #eee; }
.active .power { color: #f99a50; }

#fm .left { padding-top: 1px; }
#fm .right { --pitch: 40px; --gap: 22px; margin-top: -2px; }
#randomize .left { --pitch: 31px; }
#randomize .right { --pitch: 34px; --gap: 11px; padding-top: 2px; }
#gen1 .left, #gen2 .left { --pitch: 37px; --gap: 32px; padding-top: 93px; }
#gen2 .left { padding-top: 115px; }
#gen1 .right, #gen2 .right { --pitch: 46px; --gap: 17px; padding-top: 40px; }
#gen2 .right { padding-top: 61px; }
#lfo .left { --pitch: 37px; }
#lfo .right { --pitch: 45px; --gap: 32px; margin-top: -4px; }
#lfo .bar-bottom { --bgap: 1px; }
#lfo .bar-end { gap: 5px; margin-right: 11px; }
#lfo .bar-top { padding-right: 19px; }
#lfo .bar-top .gap { width: 8px; }

.level {
    position: relative;
    flex: none;
    width: 18px;
    height: 108px;
    margin: auto auto 5px;
    background:
        linear-gradient(var(--chrome), var(--chrome)) center / 4px 100% no-repeat,
        repeating-linear-gradient(transparent 0 3px, var(--chrome) 3px 4px) 0 24px no-repeat,
        linear-gradient(#6c6c6c 44px, #a8a8a8 44px);
}
.active .level {
    background:
        linear-gradient(var(--chrome), var(--chrome)) center / 4px 100% no-repeat,
        repeating-linear-gradient(transparent 0 3px, var(--chrome) 3px 4px) 0 24px no-repeat,
        linear-gradient(#4d4d4d 44px, #f99a50 44px);
}
.level::after {
    content: "";
    position: absolute;
    left: 4px;
    top: 22px;
    width: 10px;
    height: 10px;
    border-radius: 50%;
    background: #6c6c6c;
}
.active .level::after {
    background: #eee;
}

/* patcher canvas */
.canvas {
    position: relative;
    overflow: hidden;
    background: #dfdfdf;
    color: #1a1a1a;
    line-height: 14px;
}
#gen1 .canvas, #gen2 .canvas {
    background: radial-gradient(circle, #b9b9b9 1px, transparent 1px) 7px 7px / 15px 15px #e0e0e0;
}
#randomize .canvas, #lfo .canvas {
    font-family: "Liberation Sans", sans-serif;
}
.cords {
    position: absolute;
    width: 100%;
    height: 100%;
    fill: none;
}
.cords .edge { stroke: #858585; stroke-width: 3; }
.cords .core { stroke: #a4a4a4; stroke-width: 1; }
.cords .audio-a { stroke: #c5e04c; stroke-width: 3; }
.cords .audio-b { stroke: #333; stroke-width: 2; stroke-dasharray: 4 4; }
.node {
    position: absolute;
    white-space: pre;
}
.obj {
    height: 23px;
    border: solid #6f6f6f;
    border-width: 4px 0;
    background: #252525;
    color: #fff;
    padding-left: 4px;
    line-height: 15px;
}
.port {
    position: absolute;
    width: 7px;
    height: 4px;
    margin-left: -3px;
    background: #222;
}
.port.in { top: -4px; border: 1px solid #f09a90; border-top: 0; border-radius: 0 0 4px 4px; }
.port.cold { top: -4px; border: 1px solid #90d5dd; border-top: 0; border-radius: 0 0 4px 4px; }
.port.out { bottom: -4px; border: 1px solid #c5d93c; border-bottom: 0; border-radius: 4px 4px 0 0; }
.port.idle { top: -4px; background: #c4c4c4; border-radius: 0 0 4px 4px; }
.port.idle.low { top: auto; bottom: -4px; border-radius: 4px 4px 0 0; }
.codebox .port.in { top: 0; }
.codebox .port.out { bottom: 0; }
.num {
    height: 23px;
    background: #252525;
    color: #fff;
    display: flex;
    align-items: center;
}
.num::before {
    content: "";
    margin: 0 3px 0 4px;
    border: 5px solid transparent;
    border-left-color: #707070;
    border-right: 0;
}
.num input {
    width: 100%;
}
.msg {
    height: 23px;
    border-radius: 4px;
    background: linear-gradient(#565656, #323232);
    color: #fff;
    text-align: left;
    padding-left: 4px;
}
.heading {
    margin: 0;
    font-size: 18px;
    font-style: italic;
    font-weight: bold;
    line-height: 22px;
}
.note {
    margin: 0;
}
.boxed {
    border: 1px solid #a0a0a0;
    padding: 3px 4px;
}
.db {
    font: 13px/16px "Liberation Sans", sans-serif;
    color: #000;
}
.attr {
    display: flex;
    width: 150px;
    height: 23px;
    background: #252525;
    color: #fff;
}
.attr label {
    width: 101px;
    height: 23px;
    display: flex;
    align-items: center;
    gap: 6px;
    padding-left: 3px;
    border-right: 2px solid #8c8c8c;
}
.attr label svg {
    width: 8px;
    height: 16px;
    fill: #707070;
}
.attr .num {
    flex: 1;
}
.bang, .tog {
    width: 24px;
    height: 24px;
    background: #252525;
    color: #505050;
}
.bang::after {
    content: "";
    position: absolute;
    left: 4px;
    top: 4px;
    width: 16px;
    height: 16px;
    border: 2px solid currentColor;
    border-radius: 50%;
}
.tog {
    appearance: none;
    background:
        linear-gradient(45deg, transparent 46%, #505050 46% 54%, transparent 54%) center / 12px 12px no-repeat,
        linear-gradient(-45deg, transparent 46%, #505050 46% 54%, transparent 54%) center / 12px 12px no-repeat,
        #252525;
}
.iolet {
    width: 30px;
    height: 30px;
    background: #252525;
    color: #fff;
    font-weight: bold;
    display: flex;
    flex-direction: column;
    align-items: center;
    line-height: 16px;
    padding-top: 1px;
}
.iolet::after, .iolet.outlet::before {
    content: "";
    border: 8px solid transparent;
    border-top: 9px solid #c3e2e8;
    border-bottom: 0;
}
.iolet.outlet {
    padding-top: 3px;
    gap: 1px;
}
.iolet.outlet::after {
    display: none;
}
.meter {
    width: 131px;
    height: 5px;
    background: #1c1c1c;
}
.meter i {
    display: block;
    height: 5px;
    background: linear-gradient(90deg, #23f364, #a8fb62) left / 108px 5px;
}
.meter::after {
    content: "";
    position: absolute;
    left: 121px;
    top: 0;
    width: 1px;
    height: 5px;
    background: #dfdfdf;
}
.thumb {
    border: 5px solid transparent;
    border-bottom: 9px solid #777;
    border-top: 0;
}
.speaker {
    width: 44px;
    height: 44px;
    background: #252525;
}
.speaker svg {
    display: block;
    margin: 8px;
    width: 28px;
    height: 28px;
}
.preset {
    width: 40px;
    height: 18px;
    display: flex;
    gap: 4px;
    padding: 4px;
    background: #252525;
}
.preset button {
    width: 8px;
    height: 8px;
    background: #666;
}
.preset button:nth-child(2) {
    background: #c3e2e8;
}
.codebox {
    width: 259px;
    height: 131px;
    border-radius: 6px 6px 0 0;
    background: #252525;
    color: #f8f8f2;
    font: 12px/14px "DejaVu Sans Mono", monospace;
}
.codebox h3 {
    margin: 0;
    padding: 1px 6px 1px 0;
    font-size: 11px;
    text-align: right;
}
.codebox pre {
    margin: 0 2px 0 37px;
    height: 99px;
    background: #1e1e1e;
    font: inherit;
    font-weight: bold;
}
.codebox ol {
    margin: 0;
    padding: 1px 0 0 3px;
    list-style: none;
    counter-reset: line;
}
.codebox li::before {
    counter-increment: line;
    content: counter(line);
    position: absolute;
    left: 28px;
    font-size: 11px;
    font-weight: normal;
    color: #b5b5b5;
}
.codebox .scroll {
    position: absolute;
    left: 43px;
    bottom: 20px;
    width: 185px;
    height: 8px;
    border-radius: 4px;
    background: #b2b2b2;
}
.codebox .icon {
    position: absolute;
    left: 10px;
    bottom: 3px;
    width: 11px;
    height: 11px;
}
.rem { color: #6b6650; font-weight: normal; }
.op { color: #f92672; }
.lit { color: #ae81ff; }
.key { color: #4fc9ea; }

/* console */
.window.console {
    --chrome: #383838;
    grid-template: 22px 36px 1fr 34px / 1fr;
}
.filter {
    display: flex;
    align-items: center;
    justify-content: center;
    gap: 4px;
    color: #b8b8b8;
    position: relative;
}
.filter .icon {
    width: 13px;
    height: 13px;
}
.filter input {
    width: 29px;
}
.filter input::placeholder {
    color: #b8b8b8;
}
.filter .tool {
    position: absolute;
    right: 8px;
    color: #6c6c6c;
}
.log {
    background: repeating-linear-gradient(#2a2a2a 0 20px, #323232 20px 40px);
}
.console .bar-bottom {
    padding-left: 4px;
    --bgap: 10px;
}

/* dock */
.dock {
    flex: none;
    align-self: center;
    display: flex;
    height: 45px;
    padding: 0 3px;
    border-radius: 5px 5px 0 0;
    background: #ea6034;
    border: 1px solid #c85a38;
    border-bottom: 0;
}
.app {
    position: relative;
    width: 36px;
    padding: 4px 2px 0;
    display: flex;
    align-items: flex-start;
}
.app svg {
    width: 32px;
    height: 32px;
}
.app.running::after {
    content: "";
    position: absolute;
    left: 16px;
    bottom: 2px;
    width: 4px;
    height: 4px;
    border-radius: 50%;
    background: #5c0c0c;
}
.divider {
    width: 1px;
    height: 34px;
    margin: 5px 6px 0 8px;
    background: #a8401f;
}
```
FILE: script.js
```javascript
// [left, top, icon, label]
const files = [
    [1796, 7, 'extdisk', '500GBwork\n1'],
    [1882, 11, 'disk', 'Macintosh\nHD'],
    [1882, 79, 'textfile', 'schedule'],
    [1879, 138, 'folder', '1106'],
    [1878, 199, 'folder', 'ASL'],
    [1877, 257, 'folder', 'お仕事'],
    [1878, 318, 'textfile', 'メアド'],
    [1880, 379, 'folder', '実験中'],
    [1880, 436, 'pdffile', 'LIFE2022.p\ndf'],
];

// nodes: [type, x, y, width, text, inlets, outlets, idle inlets, cold inlets, idle outlets]
// cords are svg paths in the same coordinates, '~' marks a signal cord
const patches = {
    fm: {
        origin: [60, 98],
        cords: [
            'M87 248V300', 'M173 248C173 275 114 270 114 300', 'M278 248V281Q278 286 270 286', 'M400 248V281Q400 286 392 286H96Q87 286 87 294',
            'M564 183C566 190 575 182 578 176L588 161C592 154 600 154 600 160',
            'M600 182V300', 'M611 182Q611 194 606 202M610 225L606 234', 'M622 182Q622 194 618 202',
            'M633 182C633 195 645 200 652 203', 'M645 182C645 195 665 200 684 203',
            'M656 182C656 202 690 192 735 190C765 188 768 195 768 202',
            'M740 214Q754 217 760 222', 'M705 225Q730 234 760 248', 'M740 247Q766 236 766 225', 'M672 264L708 257',
            'M740 272Q767 268 767 257', 'M767 287C767 300 740 296 700 294C640 289 602 286 600 300', 'M618 287Q600 290 600 300',
            '~M87 323V340', '~M600 323V340', '~M87 374V393', '~M87 377L108 386Q112 388 112 393',
            '~M600 374V393', '~M600 377L621 386Q625 388 625 393',
        ],
        nodes: [
            ['heading', 81, 117, 0, 'Feedback FM'],
            ['heading', 594, 117, 0, 'Three oscillator indirect feedback FM'],
            ['note', 81, 199, 0, 'carrier'],
            ['note', 167, 199, 0, 'modulator'],
            ['note', 272, 199, 0, 'modulation depth'],
            ['note', 394, 199, 0, 'feedback FM'],
            ['num', 77, 225, 50, '440.'],
            ['num', 163, 225, 63, '3.'],
            ['num', 268, 225, 50, '0.25'],
            ['num', 390, 225, 63, '0.'],
            ['msg', 268, 255, 57, 'depth $1'],
            ['msg', 390, 255, 37, 'fb $1'],
            ['obj', 77, 300, 46, 'gen~', [10, 37], [10], [], [], [37]],
            ['meter', 79, 343, 131, 61],
            ['thumb', 135, 349, 0, ''],
            ['db', 80, 359, 0, '-35 dB'],
            ['speaker', 77, 393, 44, ''],
            ['note', 394, 319, 0, 'try bringing fb up very\nslowly...'],
            ['note', 394, 364, 0, 'FM is generally considered\nless intuitive... FFM is even\nweirder.'],
            ['preset', 390, 420, 40, ''],
            ['bang', 552, 159, 24, ''],
            ['obj', 590, 159, 75, 'p randomize', [10], [10, 21, 32, 43, 55, 66]],
            ['attr', 590, 202, 150, 'b1', '256.5'],
            ['attr', 590, 234, 150, 'b2', '731.9'],
            ['attr', 590, 264, 150, 'b3', '123.2'],
            ['attr', 758, 202, 150, 'f1', '403.6'],
            ['attr', 758, 234, 150, 'f2', '363.6'],
            ['attr', 758, 264, 150, 'f3', '287.2'],
            ['obj', 590, 300, 38, 'gen~', [10], [10]],
            ['meter', 592, 343, 131, 106],
            ['thumb', 695, 349, 0, ''],
            ['db', 593, 359, 0, '-7.2 dB'],
            ['speaker', 590, 393, 44, ''],
        ],
    },
    randomize: {
        origin: [1104, 147],
        cords: [
            'M1555 216V363', 'M1555 253C1555 264 1568 264 1590 264C1612 264 1622 266 1622 276', 'M1622 300V312',
            'M1555 290Q1555 307 1543 307H1176Q1165 307 1165 320V363', 'M1622 334V342Q1622 348 1613 348H1188Q1179 348 1179 356V363',
        ],
        nodes: [
            ['iolet', 1545, 186, 30, '1'],
            ['bang', 1545, 229, 24, ''],
            ['tog', 1612, 276, 24, ''],
            ['obj', 1612, 312, 58, 'metro 10', [10], [10], [48]],
        ],
    },
    gen1: {
        origin: [59, 585],
        cords: [
            'M89 661V678', 'M329 661V678', 'M89 808V923', 'M329 808V878', 'M104 871V893', 'M104 916C104 923 89 917 89 923',
            'M118 893V890Q118 883 128 883H205Q217 883 217 896V939Q217 952 230 952H320Q329 952 329 946', 'M329 946V983',
            'M320 952Q312 952 312 938V855Q312 838 325 838H362Q374 838 374 848', 'M389 826L387 848', 'M374 871V878',
            'M329 901C329 908 340 904 346 894C355 878 374 868 374 878', 'M374 901C366 901 362 895 357 887C350 872 342 873 342 878',
            'M374 901V910Q374 916 363 916H338Q329 916 329 923', 'M89 946V953', 'M89 976V983',
        ],
        nodes: [
            ['note boxed', 84, 600, 285, 'One form of feedback FM (actually, feedback PM)'],
            ['obj', 79, 638, 33, 'in 1', [], [10]],
            ['obj', 319, 638, 33, 'in 2', [], [10]],
            ['codebox', 79, 678, 259, ''],
            ['note boxed', 379, 772, 150, 'amount of self-influence'],
            ['obj', 379, 803, 70, 'param fb 0', [], [10]],
            ['note boxed', 94, 818, 150, 'modulation depth'],
            ['obj', 94, 848, 107, 'param depth 0.01', [], [10]],
            ['obj', 94, 893, 33, '*', [10, 24], [10]],
            ['obj', 79, 923, 46, 'accum', [10], [10], [37]],
            ['obj', 79, 953, 26, 'sin', [10], [10]],
            ['note boxed', 109, 953, 150, 'carrier waveform'],
            ['obj', 79, 983, 37, 'out 1', [10], []],
            ['obj', 364, 848, 33, '*', [10, 23], [10]],
            ['note boxed', 413, 848, 150, 'output modulates phase'],
            ['obj', 319, 878, 33, '+', [10, 23], [10]],
            ['obj', 364, 878, 47, 'history', [10], [10]],
            ['note boxed', 418, 878, 128, 'using history node to\naccumulate phase'],
            ['obj', 319, 923, 26, 'sin', [10], [10]],
            ['note boxed', 364, 923, 150, 'modulator waveform'],
            ['obj', 319, 983, 37, 'out 2', [10], []],
        ],
    },
    gen2: {
        origin: [799, 583],
        cords: [
            'M1005 622V666', 'M1033 655C1033 663 1018 658 1018 666', 'M1005 689V699', 'M891 689C891 704 920 696 950 693C975 689 992 688 992 699',
            'M992 722V730', 'M992 753L993 785', 'M1033 778C1033 785 1006 778 1006 785', 'M993 808V818', 'M879 808C879 822 910 816 940 812C965 808 979 808 979 818',
            'M979 841V849', 'M979 872V907', 'M1021 897C1021 905 992 898 992 907', 'M979 930V940', 'M865 930C865 944 895 938 925 934C950 930 966 930 966 940',
            'M966 963V971', 'M966 994V1011', 'M966 994Q966 1000 976 1000H1106Q1120 1000 1120 986V607Q1120 594 1106 594H1013Q1005 594 1005 600',
        ],
        nodes: [
            ['note boxed', 810, 600, 150, 'Three oscillator indirect\nfeedback FM'],
            ['obj', 995, 600, 46, 'history', [10], [10]],
            ['obj', 1023, 632, 85, 'param b1 123', [], [10]],
            ['obj', 995, 666, 33, '*', [10, 23], [10]],
            ['obj', 881, 666, 75, 'param f1 89', [], [10]],
            ['obj', 982, 699, 33, '+', [10, 23], [10]],
            ['obj', 982, 730, 38, 'cycle', [10], [10], [], [], [29]],
            ['obj', 1023, 755, 78, 'param b2 73', [], [10]],
            ['obj', 983, 785, 33, '*', [10, 23], [10]],
            ['obj', 869, 785, 68, 'param f2 3', [], [10]],
            ['obj', 969, 818, 33, '+', [10, 23], [10]],
            ['obj', 969, 849, 38, 'cycle', [10], [10], [], [], [29]],
            ['obj', 1011, 874, 85, 'param b3 164', [], [10]],
            ['obj', 969, 907, 33, '*', [10, 23], [10]],
            ['obj', 855, 907, 81, 'param f3 126', [], [10]],
            ['obj', 956, 940, 33, '+', [10, 23], [10]],
            ['obj', 956, 971, 38, 'cycle', [10], [10], [], [], [29]],
            ['obj', 956, 1011, 37, 'out 1', [10], []],
        ],
    },
    lfo: {
        origin: [1274, 591],
        cords: [
            'M1334 661V829', 'M1369 661C1369 745 1337 745 1337 829', 'M1346 713C1346 728 1390 721 1420 719C1450 716 1504 708 1504 728',
            'M1359 713C1359 724 1375 720 1395 718C1412 716 1420 720 1420 728', 'M1420 750C1420 762 1440 756 1470 753C1490 750 1497 752 1497 758',
            'M1504 750L1508 758', 'M1420 750C1420 780 1392 800 1392 829', 'M1497 780C1497 808 1411 796 1411 829', 'M1334 883V943',
            '~M1334 809V829', '~M1334 851V861',
        ],
        nodes: [
            ['iolet', 1324, 631, 30, '1'],
            ['iolet', 1359, 631, 30, '2'],
            ['obj', 1324, 691, 44, 't b b b', [10], [10, 22, 35]],
            ['obj', 1324, 728, 75, 'random 100', [10], [10], [66]],
            ['obj', 1410, 728, 75, 'random 512', [10], [10], [66]],
            ['obj', 1494, 728, 75, 'random 512', [10], [10], [66]],
            ['obj', 1324, 758, 35, '* 0.1', [10], [10], [26]],
            ['obj', 1487, 758, 31, '+ 0.', [10], [10], [], [21]],
            ['obj', 1324, 787, 45, 'cycle~', [10], [10], [35]],
            ['obj', 1324, 829, 116, 'scale~ -1. 1. 0. 512.', [10], [10], [29, 49, 106], [68, 87]],
            ['obj', 1324, 861, 66, 'snapshot~', [10], [10], [57]],
            ['iolet outlet', 1324, 943, 30, '1'],
        ],
    },
};

[1155, 1233, 1311, 1389, 1467, 1545].forEach((x, i) => {
    const p = patches.randomize;
    p.nodes.push(['obj', x, 363, 33, 'p lfo', [10, 24], [10]]);
    p.nodes.push(['iolet outlet', x, 409, 30, String(i + 1)]);
    p.cords.push(`M${x + 10} 385V409`, `M${x + 34} 348Q${x + 24} 348 ${x + 24} 356V363`);
    if (i < 5) p.cords.push(`M${x + 22} 307Q${x + 10} 307 ${x + 10} 320V363`);
});

const icon = name => `<svg class="icon"><use href="#${name}"/></svg>`;

// "+" adds the drop-down arrow, "-" greys the tool out, "|" is a gap
function tools(list) {
    return list.split(' ').filter(Boolean).map(item => {
        if (item[0] === '|') return '<span class="gap"></span>'.repeat(item.length);
        const name = item.replace(/[+-]/g, '');
        if (name === 'meter') return '<div class="level"></div>';
        const cls = (item.includes('+') ? ' menu' : '') + (item.includes('-') ? ' off' : '');
        return `<button class="tool ${name === 'note' ? '' : name}${cls}" aria-label="${name}">${icon(name)}</button>`;
    }).join('');
}

const ports = (cls, list) => (list || []).map(x => `<i class="port ${cls}" style="left:${x}px"></i>`).join('');

const speaker = '<svg viewBox="0 0 28 28"><path d="M1 8h6l9-7v25l-9-7H1z" fill="#c3e2e8"/><path d="M18 10q2 4 0 8M21 7q4 7 0 13M24 5q6 9 0 18" fill="none" stroke="#c3e2e8" stroke-width="2"/></svg>';

const code = `<h3>CodeBox</h3><pre><ol><li><span class="rem">// convert frequencies to</span></li><li><span class="rem">// radians-per-sample</span></li><li>f2rps <span class="op">=</span> <span class="lit">2</span><span class="op">*</span><span class="key">pi</span><span class="op">/</span>samplerate;</li><li><span class="key">out1</span> <span class="op">=</span> <span class="key">in1</span><span class="op">*</span>f2rps;</li><li><span class="key">out2</span> <span class="op">=</span> <span class="key">in2</span><span class="op">*</span>f2rps;</li></ol></pre><div class="scroll"></div>${icon('tack')}${ports('in', [10, 250])}${ports('out', [10, 250])}`;

function node([type, x, y, w, text, ...rest], [ox, oy]) {
    const kind = type.split(' ')[0];
    const pos = `left:${x - ox}px;top:${y - oy}px` + (w ? `;width:${w}px` : '');
    const open = (tag, extra = '') => `<${tag} class="node ${type}" style="${pos}" ${extra}>`;
    switch (kind) {
        case 'obj':
            return open('div') + text + ports('in', rest[0]) + ports('out', rest[1]) + ports('idle', rest[2]) + ports('cold', rest[3]) + ports('idle low', rest[4]) + '</div>';
        case 'heading': return open('h3') + text + '</h3>';
        case 'note': return open('p') + text + '</p>';
        case 'num': return open('div') + `<input type="text" aria-label="value" value="${text}"></div>`;
        case 'msg': return open('button') + text + '</button>';
        case 'bang': return open('button', 'aria-label="bang"') + '</button>';
        case 'tog': return open('input', 'type="checkbox" aria-label="toggle"');
        case 'attr':
            return open('div') + `<label for="${text}"><svg viewBox="0 0 8 16"><path d="M4 1l4 5H0zM4 15l4-5H0z"/></svg>${text}</label><div class="num"><input id="${text}" type="text" value="${rest[0]}"></div></div>`;
        case 'meter': return open('div') + `<i style="width:${text}px"></i></div>`;
        case 'speaker': return open('button', 'aria-label="audio"') + speaker + '</button>';
        case 'preset': return open('div') + '<button aria-label="preset 1"></button><button aria-label="preset 2"></button><button aria-label="preset 3"></button></div>';
        case 'codebox': return open('div') + code + '</div>';
        default: return open('div') + text + '</div>';
    }
}

function cord(d) {
    if (d[0] === '~') return `<path class="audio-a" d="${d.slice(1)}"/><path class="audio-b" d="${d.slice(1)}"/>`;
    return `<path class="edge" d="${d}"/><path class="core" d="${d}"/>`;
}

Object.entries(patches).forEach(([id, patch]) => {
    const win = document.getElementById(id);
    const d = win.dataset;
    win.innerHTML = `
        <header class="titlebar"><div class="lights"><button aria-label="close"></button><button aria-label="minimize"></button><button aria-label="zoom"></button></div><h2>${d.title}</h2></header>
        <div class="bar-top"><span class="zoom"><select aria-label="Zoom"><option>100%</option></select></span>${tools(d.top)}<button class="tool calendar" aria-label="calendar">${icon('calendar')}</button></div>
        <div class="bar-side left">${tools(d.left)}</div>
        <div class="canvas"><svg class="cords"><g transform="translate(${-patch.origin[0]} ${-patch.origin[1]})">${patch.cords.map(cord).join('')}</g></svg>${patch.nodes.map(n => node(n, patch.origin)).join('')}</div>
        <div class="bar-side right">${tools(d.right)}</div>
        <div class="bar-bottom">${tools(d.bottom)}<div class="bar-end">${tools(d.end)}</div></div>`;
});

const consoleBar = document.querySelector('#console .bar-bottom');
consoleBar.innerHTML = tools(consoleBar.dataset.icons);

const desktop = document.getElementById('desktop');
files.forEach(([x, y, name, label]) => {
    desktop.insertAdjacentHTML('beforeend', `<a href="#" class="file" style="left:${x}px;top:${y}px"><svg><use href="#${name}"/></svg>${label}</a>`);
});

// stars
let seed = 7;
const rnd = () => (seed = (seed * 16807) % 2147483647) / 2147483647;
let sky = '';
for (let i = 0; i < 900; i++) {
    const x = rnd() * 1920, y = rnd() * 1100, r = rnd();
    sky += `<circle cx="${x.toFixed()}" cy="${y.toFixed()}" r="${r > 0.96 ? 2 : 1}" fill="#dde6f0" opacity="${(0.2 + r * 0.65).toFixed(2)}"/>`;
}
document.getElementById('stars').innerHTML = sky;
```
